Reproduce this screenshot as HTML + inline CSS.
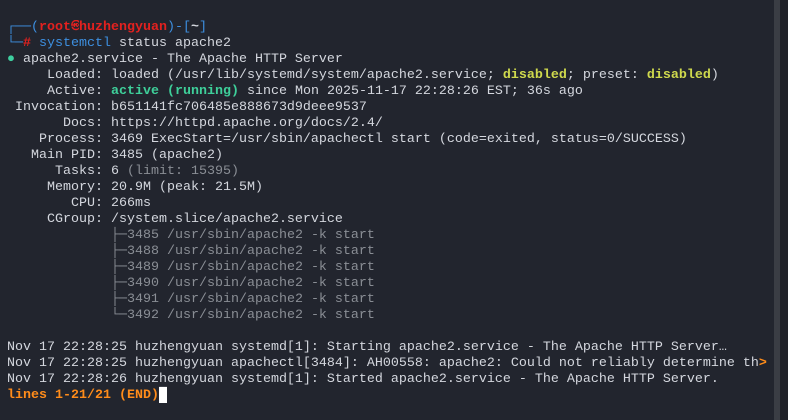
<!DOCTYPE html>
<html><head><meta charset="utf-8"><style>
html,body{margin:0;padding:0;}
body{width:788px;height:420px;background:#22252e;overflow:hidden;position:relative;}
pre{position:absolute;left:7px;top:20px;margin:0;font-family:"Liberation Mono","DejaVu Sans Mono",monospace;font-size:13.33px;line-height:16px;color:#d4d7de;}
.b{color:#3d8fe0}.r{color:#e3211f;font-weight:bold}.g{color:#3ecf9a;font-weight:bold}.y{color:#cfd94d;font-weight:bold}
.d{color:#8a8e95}.o{color:#ff8c1a;font-weight:bold}.dot{color:#3ecfa0}
.cur{background:#fff;color:#fff}
.sk{display:inline-block;width:8px;overflow:hidden;font-size:10px;vertical-align:top;text-align:center}
.sb{position:absolute;left:774px;top:0;width:6px;height:420px;background:#3a3d44;}
.sb2{position:absolute;left:780px;top:0;width:8px;height:420px;background:#202228;}
</style></head><body>
<div class="sb"></div><div class="sb2"></div>
<pre><span class="b">┌──(</span><span class="r">root<span class="sk">㉿</span>huzhengyuan</span><span class="b">)-[</span><b>~</b><span class="b">]</span>
<span class="b">└─</span><span class="r">#</span> <span class="b">systemctl</span> status apache2
<span class="dot">●</span> apache2.service - The Apache HTTP Server
     Loaded: loaded (/usr/lib/systemd/system/apache2.service; <span class="y">disabled</span>; preset: <span class="y">disabled</span>)
     Active: <span class="g">active (running)</span> since Mon 2025-11-17 22:28:26 EST; 36s ago
 Invocation: b651141fc706485e888673d9deee9537
       Docs: https://httpd.apache.org/docs/2.4/
    Process: 3469 ExecStart=/usr/sbin/apachectl start (code=exited, status=0/SUCCESS)
   Main PID: 3485 (apache2)
      Tasks: 6 <span class="d">(limit: 15395)</span>
     Memory: 20.9M (peak: 21.5M)
        CPU: 266ms
     CGroup: /system.slice/apache2.service
             <span class="d">├─3485 /usr/sbin/apache2 -k start</span>
             <span class="d">├─3488 /usr/sbin/apache2 -k start</span>
             <span class="d">├─3489 /usr/sbin/apache2 -k start</span>
             <span class="d">├─3490 /usr/sbin/apache2 -k start</span>
             <span class="d">├─3491 /usr/sbin/apache2 -k start</span>
             <span class="d">└─3492 /usr/sbin/apache2 -k start</span>

Nov 17 22:28:25 huzhengyuan systemd[1]: Starting apache2.service - The Apache HTTP Server…
Nov 17 22:28:25 huzhengyuan apachectl[3484]: AH00558: apache2: Could not reliably determine th<span class="o">&gt;</span>
Nov 17 22:28:26 huzhengyuan systemd[1]: Started apache2.service - The Apache HTTP Server.
<span class="o">lines 1-21/21 (END)</span><span class="cur">█</span></pre>
</body></html>
